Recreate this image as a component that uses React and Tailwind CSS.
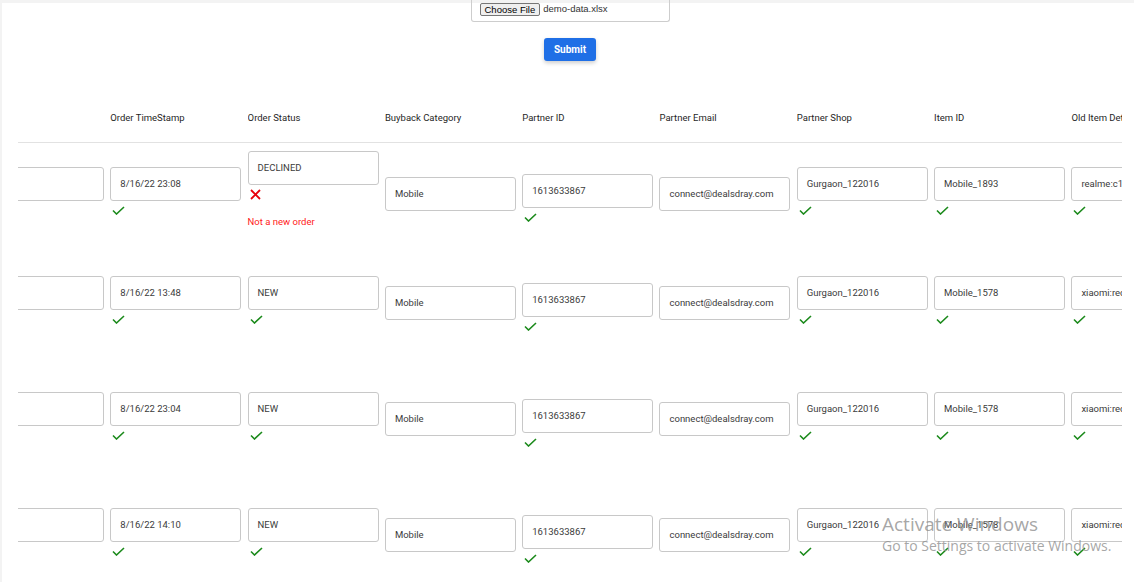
import React, { useLayoutEffect, useRef } from "react";

const COLS = [
  "Order ID",
  "Order TimeStamp",
  "Order Status",
  "Buyback Category",
  "Partner ID",
  "Partner Email",
  "Partner Shop",
  "Item ID",
  "Old Item Details",
  "New Item Details",
];

const mk = (ts, status, statusErr, item, old) => [
  { v: "", k: "check" },
  { v: ts, k: "check" },
  statusErr ? { v: status, k: "error", msg: "Not a new order" } : { v: status, k: "check" },
  { v: "Mobile", k: "none" },
  { v: "1613633867", k: "pid" },
  { v: "connect@dealsdray.com", k: "none" },
  { v: "Gurgaon_122016", k: "check" },
  { v: item, k: "check" },
  { v: old, k: "check" },
  { v: "", k: "check" },
];

const ROWS = [
  { h: "h-[102px]", cells: mk("8/16/22 23:08", "DECLINED", true, "Mobile_1893", "realme:c11 (2GB)") },
  { h: "h-[116px]", cells: mk("8/16/22 13:48", "NEW", false, "Mobile_1578", "xiaomi:redmi note 8") },
  { h: "h-[116px]", cells: mk("8/16/22 23:04", "NEW", false, "Mobile_1578", "xiaomi:redmi note 8") },
  { h: "h-[116px]", cells: mk("8/16/22 14:10", "NEW", false, "Mobile_1578", "xiaomi:redmi note 8") },
];

function Check() {
  return (
    <svg width="13" height="9" viewBox="0 0 13 9" fill="none">
      <polyline points="1,4.5 4.5,8 12,1" stroke="#1b8a1b" strokeWidth="1.6" />
    </svg>
  );
}

function Cross() {
  return (
    <svg width="11" height="11" viewBox="0 0 11 11" fill="none">
      <path d="M1 1 L10 10 M10 1 L1 10" stroke="#e8000b" strokeWidth="1.8" />
    </svg>
  );
}

function Box({ v }) {
  return (
    <div className="w-[131px] h-[34px] shrink-0 border border-[#c8c8c8] rounded-[3px] px-[9px] flex items-center text-[9.5px] text-[#3b3b3b] whitespace-nowrap overflow-hidden bg-white">
      {v}
    </div>
  );
}

function Cell({ c }) {
  return (
    <div className="w-[137.3px] shrink-0 flex flex-col justify-center">
      <Box v={c.v} />
      {c.k === "check" && (
        <div className="h-[20px] pt-[5px] pl-[2px]">
          <Check />
        </div>
      )}
      {c.k === "pid" && (
        <div className="h-[6px] pt-[5px] pl-[2px] overflow-visible">
          <Check />
        </div>
      )}
      {c.k === "error" && (
        <div className="flex flex-col">
          <div className="h-[20px] pt-[4px] pl-[2px]">
            <Cross />
          </div>
          <div className="mt-[11px] mb-[9px] leading-[12px] text-[9.5px] text-[#ff1a1a]">{c.msg}</div>
        </div>
      )}
    </div>
  );
}

export default function App() {
  const ref = useRef(null);
  useLayoutEffect(() => {
    if (ref.current) ref.current.scrollLeft = 45;
  }, []);

  return (
    <div className="relative min-h-[582px] bg-[#f3f3f3] pl-[2px] pt-[3px] font-['Roboto','Liberation_Sans',sans-serif]">
      <div className="bg-white min-h-[579px] pl-[16px] pr-[12px]">
        <div className="flex flex-col items-center">
          <div className="-mt-[3px] w-[199px] h-[22px] border border-t-0 border-[#cdcdcd] rounded-b-[3px] pl-[8px] pt-[3px] flex items-start gap-[3px] font-['Liberation_Sans',sans-serif] text-[9.5px] leading-[12px] text-[#333]">
            <span className="border border-[#767676] bg-[#efefef] rounded-[2px] px-[4px] h-[13px] leading-[11px] text-black">
              Choose File
            </span>
            <span>demo-data.xlsx</span>
          </div>
          <button className="mt-[16px] w-[52px] h-[23px] rounded-[3px] bg-[#1f6fe6] text-white text-[10px] font-bold shadow-[0_2px_4px_rgba(0,0,0,0.2)]">
            Submit
          </button>
        </div>

        <div ref={ref} className="mt-[33px] overflow-hidden">
          <div className="w-max">
            <div className="flex h-[49px] items-center border-b border-[#e2e2e2]">
              {COLS.map((h) => (
                <div key={h} className="w-[137.3px] shrink-0 text-[9.5px] text-[#1f1f1f] whitespace-nowrap overflow-hidden">
                  {h}
                </div>
              ))}
            </div>
            {ROWS.map((r, i) => (
              <div key={i} className={`flex items-center ${r.h}`}>
                {r.cells.map((c, j) => (
                  <Cell key={j} c={c} />
                ))}
              </div>
            ))}
          </div>
        </div>
      </div>

      <div className="absolute left-[882px] top-[512px] pointer-events-none font-['Open_Sans','Liberation_Sans',sans-serif] text-[#8f8f8f]/80">
        <div className="text-[19px] leading-[24px]">Activate Windows</div>
        <div className="text-[14px] leading-[18px] mt-[1px]">Go to Settings to activate Windows.</div>
      </div>
    </div>
  );
}
